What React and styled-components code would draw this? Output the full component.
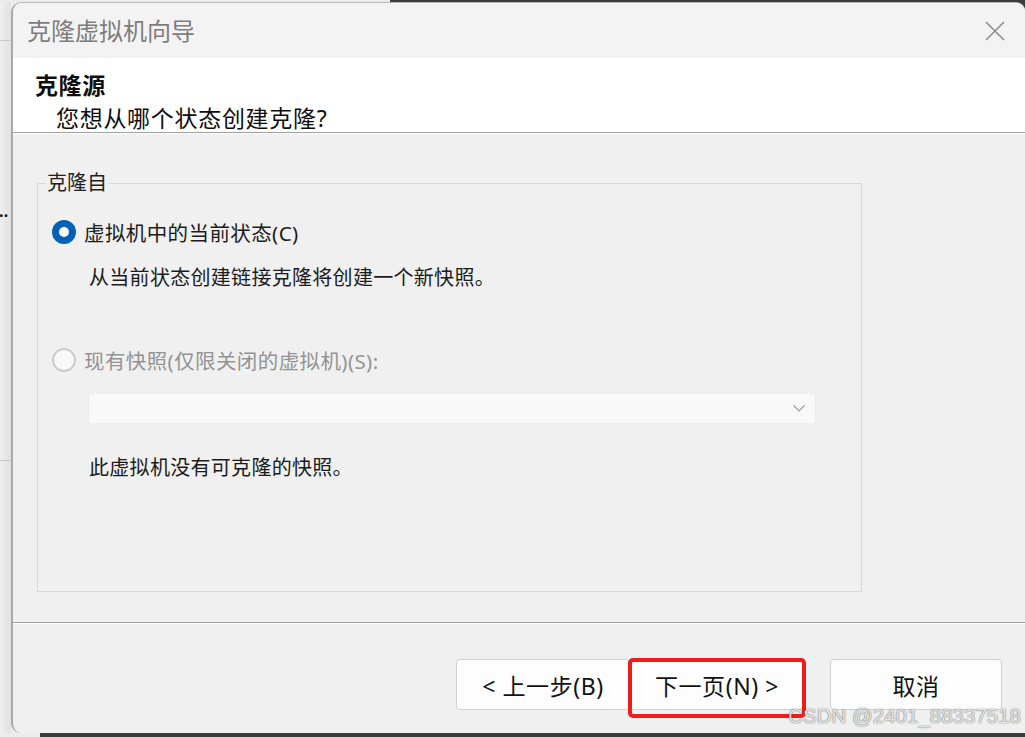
import styled, { createGlobalStyle } from "styled-components";

const GlobalStyle = createGlobalStyle`
  html, body {
    margin: 0;
    padding: 0;
  }
  body {
    width: 1025px;
    height: 737px;
    overflow: hidden;
    font-family: "Noto Sans", "Noto Sans CJK SC", sans-serif;
    background: #3b3b3b;
  }
`;

const Screen = styled.div`
  display: flex;
  height: 737px;
  box-sizing: border-box;
  padding: 2px 0 4px;
  background:
    linear-gradient(90deg, #ececec 390px, transparent 390px) top / 100% 2px no-repeat,
    linear-gradient(90deg, #ececec 40px, #3b3b3b 40px);
`;

const BackWindow = styled.div`
  width: 11px;
  flex: none;
  display: flex;
  flex-direction: column;
  padding-top: 199px;
  box-sizing: border-box;
  background:
    linear-gradient(#c9c9c9, #c9c9c9) 0 38px / 100% 1px no-repeat,
    linear-gradient(#c9c9c9, #c9c9c9) 0 458px / 100% 1px no-repeat,
    linear-gradient(90deg, #efefef, #e1e1e1);
`;

const Dots = styled.span`
  font-size: 16px;
  line-height: 20px;
  font-weight: 700;
  color: #111111;
  letter-spacing: -1px;
  margin-left: -1px;
`;

const Dialog = styled.div`
  flex: 1;
  position: relative;
  display: flex;
  flex-direction: column;
  background: #f0f0f0;
  border-left: 2px solid #a9a9a9;
  border-top: 1px solid #b9b9b9;
  border-radius: 10px 9px 0 10px;
  overflow: hidden;
`;

const TitleBar = styled.div`
  height: 55px;
  flex: none;
  display: flex;
  align-items: center;
  justify-content: space-between;
  padding: 0 20px 0 14px;
  background: #f3f3f3;
`;

const Title = styled.div`
  font-size: 24px;
  line-height: 30px;
  color: #7d7d7d;
`;

const CloseButton = styled.button`
  border: 0;
  background: none;
  padding: 0;
  width: 20px;
  height: 20px;
  display: flex;
`;

const Header = styled.div`
  height: 75px;
  flex: none;
  box-sizing: border-box;
  padding: 12px 0 0 22px;
  background: #ffffff;
  border-bottom: 1px solid #a0a0a0;
`;

const HeaderTitle = styled.div`
  font-size: 23px;
  line-height: 30px;
  letter-spacing: 0.6px;
  font-weight: 700;
  color: #0d0d0d;
`;

const HeaderSub = styled.div`
  font-size: 23px;
  line-height: 30px;
  letter-spacing: 0.7px;
  margin: 3px 0 0 21px;
  color: #0d0d0d;
`;

const Body = styled.div`
  flex: 1;
  display: flex;
  flex-direction: column;
  padding: 37px 163px 30px 24px;
  border-top: 1px solid #ffffff;
`;

const Group = styled.fieldset`
  flex: 1;
  min-width: 0;
  margin: 0;
  padding: 0;
  border: 1px solid #d9d9d9;
  display: flex;
  flex-direction: column;
`;

const Legend = styled.legend`
  margin-left: 8px;
  padding: 0 1px;
  font-size: 20px;
  line-height: 24px;
  color: #1f1f1f;
`;

const OptionRow = styled.label`
  display: flex;
  align-items: center;
  gap: 8px;
  height: 28px;
  padding-left: 14px;
  margin-top: ${(p) => p.$top}px;
  font-size: 20.5px;
  letter-spacing: 0.4px;
  color: ${(p) => (p.$disabled ? "#939393" : "#1b1b1b")};
`;

const Radio = styled.span`
  width: 24px;
  height: 24px;
  flex: none;
  box-sizing: border-box;
  border-radius: 50%;
  display: flex;
  align-items: center;
  justify-content: center;
  background: ${(p) => (p.$checked ? "#0061b5" : "#f8f8f8")};
  border: ${(p) => (p.$checked ? "none" : "2px solid #cbcbcb")};

  &::after {
    content: "";
    display: ${(p) => (p.$checked ? "block" : "none")};
    width: 10px;
    height: 10px;
    border-radius: 50%;
    background: #ffffff;
  }
`;

const Note = styled.div`
  padding-left: 51px;
  margin-top: ${(p) => p.$top}px;
  font-size: 20px;
  line-height: 24px;
  letter-spacing: 0.3px;
  color: #1b1b1b;
`;

const SnapshotSelect = styled.div`
  width: 728px;
  height: 31px;
  box-sizing: border-box;
  margin: 19px 0 0 50px;
  padding-right: 10px;
  display: flex;
  align-items: center;
  justify-content: flex-end;
  background: #f9f9f9;
  border: 1px solid #ececec;
  border-radius: 3px;
`;

const Footer = styled.div`
  height: 111px;
  flex: none;
  box-sizing: border-box;
  display: flex;
  justify-content: flex-end;
  align-items: flex-start;
  padding: 36px 23px 0 0;
  border-top: 1px solid #a0a0a0;
  box-shadow: inset 0 1px 0 #ffffff;
`;

const Button = styled.button`
  width: ${(p) => p.$width || 174}px;
  height: 51px;
  margin-left: ${(p) => p.$gap || 0}px;
  box-sizing: border-box;
  border: 1px solid #d0d0d0;
  border-radius: 4px;
  background: #fdfdfd;
  font-family: "Noto Sans", "Noto Sans CJK SC", sans-serif;
  font-size: 23px;
  letter-spacing: 0.6px;
  color: #111111;
  padding: 0;
`;

const Highlight = styled.div`
  position: relative;

  &::after {
    content: "";
    position: absolute;
    left: -2px;
    right: -2px;
    top: -1px;
    bottom: -8px;
    border: 4px solid #f01b1b;
    border-radius: 5px;
    pointer-events: none;
  }
`;

const Watermark = styled.div`
  position: absolute;
  right: 4px;
  bottom: 6px;
  font-family: "Liberation Sans", Arial, sans-serif;
  font-size: 20.5px;
  line-height: 22px;
  color: rgba(236, 236, 236, 0.95);
  text-shadow:
    0 0 1px rgba(0, 0, 0, 0.6),
    0 0 2px rgba(0, 0, 0, 0.25);
`;

function CloseIcon() {
  return (
    <svg width="20" height="20" viewBox="0 0 20 20">
      <path d="M1 1 L19 19 M19 1 L1 19" stroke="#8a8a8a" strokeWidth="1.5" fill="none" />
    </svg>
  );
}

function Chevron() {
  return (
    <svg width="12" height="7" viewBox="0 0 12 7">
      <path d="M0.5 0.5 L6 6 L11.5 0.5" stroke="#9c9c9c" strokeWidth="1.2" fill="none" />
    </svg>
  );
}

export default function App() {
  return (
    <>
      <GlobalStyle />
      <Screen>
        <BackWindow>
          <Dots>‥</Dots>
        </BackWindow>
        <Dialog>
          <TitleBar>
            <Title>克隆虚拟机向导</Title>
            <CloseButton>
              <CloseIcon />
            </CloseButton>
          </TitleBar>

          <Header>
            <HeaderTitle>克隆源</HeaderTitle>
            <HeaderSub>您想从哪个状态创建克隆?</HeaderSub>
          </Header>

          <Body>
            <Group>
              <Legend>克隆自</Legend>
              <OptionRow $top={23}>
                <Radio $checked />
                虚拟机中的当前状态(C)
              </OptionRow>
              <Note $top={20}>从当前状态创建链接克隆将创建一个新快照。</Note>
              <OptionRow $top={56} $disabled>
                <Radio />
                现有快照(仅限关闭的虚拟机)(S):
              </OptionRow>
              <SnapshotSelect>
                <Chevron />
              </SnapshotSelect>
              <Note $top={32}>此虚拟机没有可克隆的快照。</Note>
            </Group>
          </Body>

          <Footer>
            <Button>&lt; 上一步(B)</Button>
            <Highlight>
              <Button>下一页(N) &gt;</Button>
            </Highlight>
            <Button $width={172} $gap={26}>
              取消
            </Button>
          </Footer>

          <Watermark>CSDN @2401_88337518</Watermark>
        </Dialog>
      </Screen>
    </>
  );
}
